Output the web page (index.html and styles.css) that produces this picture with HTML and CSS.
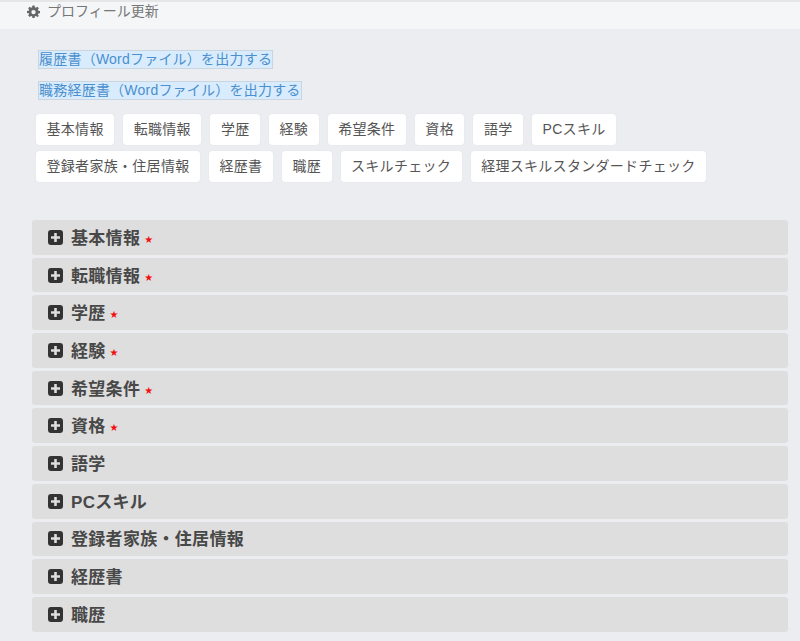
FILE: index.html
```html
<!DOCTYPE html>
<html lang="ja">
<head>
<meta charset="utf-8">
<title>プロフィール更新</title>
<link rel="stylesheet" href="styles.css">
</head>
<body>
<header class="topbar">
  <svg class="gear" viewBox="0 0 24 24" width="13" height="13"><path fill="#666" fill-rule="evenodd" d="M10 1h4l.6 3.1 1.9.8L19.1 3 22 5.900l-1.900 2.600.8 1.900L24 11v4l-3.100.6-.8 1.900 1.900 2.600L19.100 22l-2.600-1.900-1.900.8L14 24h-4l-.6-3.100-1.900-.8L4.900 22 2 19.100l1.900-2.600-.8-1.900L0 15v-4l3.100-.6.8-1.900L2 5.900 4.900 3l2.600 1.900 1.900-.8zM12 9a4 4 0 1 0 0 8 4 4 0 0 0 0-8z"/></svg>
  <span class="title">プロフィール更新</span>
</header>
<main class="content">
  <div class="links">
    <div class="link-row"><a class="doc-link">履歴書（Wordファイル）を出力する</a></div>
    <div class="link-row"><a class="doc-link">職務経歴書（Wordファイル）を出力する</a></div>
  </div>
  <nav class="buttons">
    <a class="btn">基本情報</a><a class="btn">転職情報</a><a class="btn">学歴</a><a class="btn">経験</a><a class="btn">希望条件</a><a class="btn">資格</a><a class="btn">語学</a><a class="btn">PCスキル</a>
    <a class="btn">登録者家族・住居情報</a><a class="btn">経歴書</a><a class="btn">職歴</a><a class="btn">スキルチェック</a><a class="btn">経理スキルスタンダードチェック</a>
  </nav>
  <section class="accordion">
    <div class="row"><svg class="plus" viewBox="0 0 15 15"><use href="#plus"/></svg><span class="label">基本情報</span><span class="req">★</span></div>
    <div class="row"><svg class="plus" viewBox="0 0 15 15"><use href="#plus"/></svg><span class="label">転職情報</span><span class="req">★</span></div>
    <div class="row"><svg class="plus" viewBox="0 0 15 15"><use href="#plus"/></svg><span class="label">学歴</span><span class="req">★</span></div>
    <div class="row"><svg class="plus" viewBox="0 0 15 15"><use href="#plus"/></svg><span class="label">経験</span><span class="req">★</span></div>
    <div class="row"><svg class="plus" viewBox="0 0 15 15"><use href="#plus"/></svg><span class="label">希望条件</span><span class="req">★</span></div>
    <div class="row"><svg class="plus" viewBox="0 0 15 15"><use href="#plus"/></svg><span class="label">資格</span><span class="req">★</span></div>
    <div class="row"><svg class="plus" viewBox="0 0 15 15"><use href="#plus"/></svg><span class="label">語学</span></div>
    <div class="row"><svg class="plus" viewBox="0 0 15 15"><use href="#plus"/></svg><span class="label">PCスキル</span></div>
    <div class="row"><svg class="plus" viewBox="0 0 15 15"><use href="#plus"/></svg><span class="label">登録者家族・住居情報</span></div>
    <div class="row"><svg class="plus" viewBox="0 0 15 15"><use href="#plus"/></svg><span class="label">経歴書</span></div>
    <div class="row"><svg class="plus" viewBox="0 0 15 15"><use href="#plus"/></svg><span class="label">職歴</span></div>
  </section>
</main>
<svg class="defs" width="0" height="0"><defs><path id="plus" fill="#333" fill-rule="evenodd" d="M3 0h9a3 3 0 0 1 3 3v9a3 3 0 0 1-3 3H3a3 3 0 0 1-3-3V3a3 3 0 0 1 3-3zM6.200 3v3.200H3v2.600h3.200V12h2.600V8.800H12V6.200H8.800V3z"/></defs></svg>
</body>
</html>
```
FILE: styles.css
```css
* { box-sizing: border-box; }
html, body { margin: 0; padding: 0; height: 641px; overflow: hidden; }
body {
  background: #ebedf1;
  font-family: "Liberation Sans", "Noto Sans CJK JP", sans-serif;
  color: #444;
}
.topbar {
  height: 29px;
  background: #f5f6f7;
  border-top: 2px solid #e6e6e6;
  padding-left: 27px;
  display: flex;
  align-items: flex-start;
  gap: 7px;
}
.gear { margin-top: 3px; flex: none; }
.title { font-size: 14px; line-height: 18px; color: #777; }
.content { padding: 21px 12px 0 32px; }
.links { padding-left: 6px; display: flex; flex-direction: column; gap: 11.5px; }
.link-row { height: 19px; display: flex; }
.doc-link {
  display: block;
  height: 19px;
  padding: 0 1px;
  font-size: 14px;
  letter-spacing: .22px;
  line-height: 19px;
  color: #4a8fce;
  background: #d9ecfd;
  outline: 1px solid #c9d6e2;
  outline-offset: -1px;
  white-space: nowrap;
}
.buttons {
  margin-top: 14.5px;
  padding-left: 4px;
  display: flex;
  flex-wrap: wrap;
  gap: 6px 9px;
  width: 700px;
}
.btn {
  height: 31px;
  padding: 0 10.5px;
  font-size: 14px;
  letter-spacing: .3px;
  line-height: 31px;
  color: #555;
  background: #fff;
  border-radius: 3px;
  box-shadow: 0 0 1px rgba(0,0,0,.12);
  white-space: nowrap;
}
.accordion { margin-top: 38px; display: flex; flex-direction: column; gap: 3px; }
.row {
  height: 34.7px;
  background: #dedede;
  border-radius: 3px;
  padding-left: 16px;
  display: flex;
  align-items: center;
}
.plus { width: 15px; height: 15px; flex: none; }
.label { margin-left: 8px; margin-top: -2px; font-size: 17px; letter-spacing: .3px; font-weight: 700; color: #484848; white-space: nowrap; }
.req { margin-left: 4px; margin-top: 5px; font-size: 10px; line-height: 10px; color: #f01010; font-family: "DejaVu Sans", sans-serif; }
.defs { position: absolute; }
```
